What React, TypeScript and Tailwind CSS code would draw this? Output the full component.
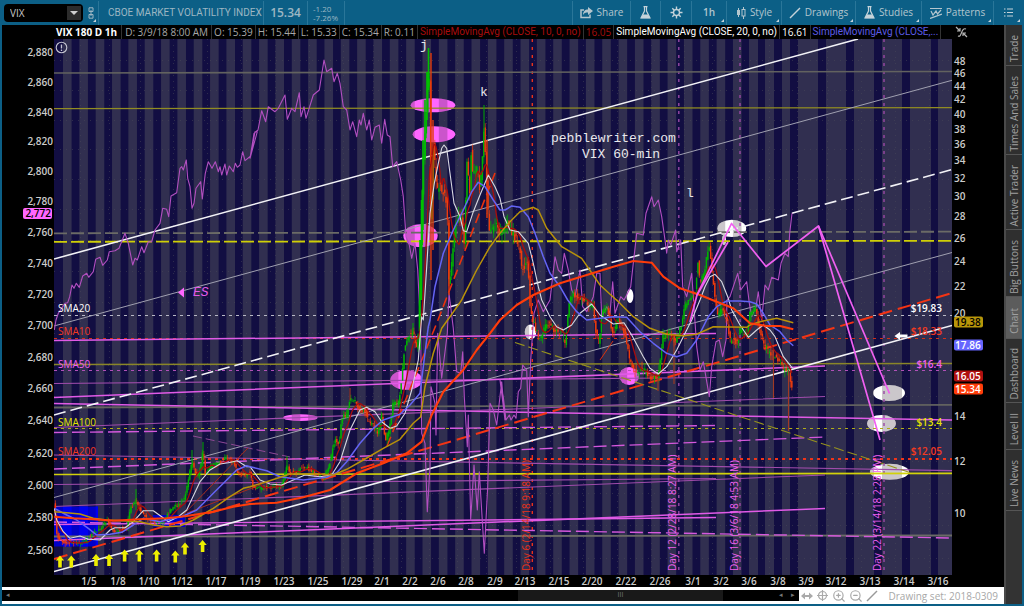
import React from "react";
import { LuZoomIn, LuZoomOut } from "react-icons/lu";

type Pt = [number, number];

/* Segments are digitised at three units per chart pixel, relative to an origin. */
const seg = (ox: number, oy: number, s: string): Pt[] =>
  s
    .trim()
    .split(/\s+/)
    .map((p) => p.split(",").map(Number))
    .map(([x, y]) => [ox + x / 3, oy + y / 3]);

const raw = (s: string): Pt[] => seg(0, 0, s).map(([x, y]) => [x * 3, y * 3]);
const line = (pts: Pt[]) => pts.map(([x, y]) => `${x.toFixed(1)},${y.toFixed(1)}`).join(" ");

const futures: Pt[] = [
  ...seg(0, 300, "163,90 168,60 175,40 188,20 195,10"),
  ...seg(0, 40, "203,788 209,770 216,735 222,745 229,730 238,742 248,708 260,700 266,712 280,695 287,658 300,652 308,676 322,660 328,635 345,632 357,625 375,580 385,610 398,675 405,655 412,660 425,620 432,638 445,605 455,605 465,570 480,550 488,505 500,508 506,530 513,468 530,458 540,385 545,380 550,390 559,360 563,415 570,440 576,505 582,490 588,445 602,425 607,477 616,400 625,365 636,385 646,365 655,395 660,380 665,405 675,372 680,405 688,378 700,395 706,370 712,382 720,375 728,335 735,362 752,348 765,275 772,275"),
  ...seg(250, 40, "0,355 12,280 24,270 35,212 47,245 55,200 75,215 85,205 105,165 112,238 125,205 135,215 148,158 153,230 162,200 168,235 182,190 190,165 208,150 222,60 230,95 245,85 252,125 262,100 270,130 280,200 290,210 300,270 308,245 320,290 328,240 333,255 340,220 350,270 358,240 365,300 375,262 388,255 395,310 404,238 412,285 420,290 428,380 440,365 452,420 460,470 468,590 478,615 485,655 495,610 503,690"),
  ...seg(250, 300, "512,90 515,400 525,430 532,635 540,500 543,260 555,310 558,405 563,100 575,235 585,155 592,100 597,-20 610,85 620,215 632,220 638,155 643,290 652,440 655,345 662,660 672,495 682,630 688,515 703,760 713,560 720,310 730,330 740,375 755,245 765,360"),
  ...seg(500, 300, "0,240 10,290 18,360 28,345 33,360 42,345 48,355 55,275 62,265 68,195 80,210 85,350 92,180"),
  ...seg(500, 40, "102,820 115,780 130,815 150,780 165,650 175,690 185,700 193,640 205,690 215,750 225,770 240,690 248,800 260,815 280,770 290,700 300,700 305,830 320,800 330,820 338,725 345,820 362,770 372,780 380,765 392,740 400,670 410,580 430,585 438,520 455,470 462,500 475,480 485,530 495,600 500,640 505,600 512,615 527,570 530,635 542,600 548,740 560,770 575,700"),
  ...seg(500, 300, "590,140 600,210 610,185 628,290 635,200 648,125 658,120 668,170 678,120 681,0"),
  ...seg(500, 40, "690,770 700,740 713,700 722,750 740,725 748,790"),
  ...seg(750, 40, "5,830 18,800 25,755 35,840 45,735 55,750 65,712 85,720 93,670 105,640 115,650 119,580 126,520"),
];

const price: Pt[] = raw(
  "54,505 57,535 60,541 70,543 80,543 88,540 92,533 100,530 107,520 112,531 120,530 127,527 130,510 136,500 140,510 147,519 155,522 163,521 170,510 178,505 185,498 188,480 192,462 196,475 199,475 203,450 205,473 212,465 220,462 226,458 233,462 238,473 245,475 250,472 253,487 260,488 270,487 282,485 287,465 289,472 297,473 302,467 307,468 317,475 324,478 330,463 335,437 339,443 342,417 347,415 350,400 357,402 358,410 365,410 368,420 373,425 378,433 382,413 385,439 389,433 393,403 399,403 404,353 408,337 413,332 417,350 419,317 421,240 423,163 427,107 429,60 431,260 433,140 437,190 440,183 447,203 449,288 453,250 456,220 462,213 464,248 467,163 470,193 471,148 473,177 478,167 480,195 482,160 484,125 487,190 489,230 493,232 497,220 500,233 503,230 507,224 513,233 520,247 522,270 528,260 530,307 533,322 540,340 545,327 550,322 553,330 563,334 565,344 568,313 570,300 572,294 578,297 587,303 593,307 595,327 599,343 602,310 607,310 613,333 618,320 625,333 629,357 635,372 643,370 652,378 658,375 663,337 670,332 675,341 680,330 685,307 688,300 695,293 698,262 700,285 704,273 709,243 712,273 715,300 717,315 722,309 727,320 730,341 738,341 740,330 747,335 750,313 755,308 760,330 765,347 773,355 780,360 783,370 789,372 792,387"
);

const ma20: Pt[] = [
  ...seg(0, 300, "163,625 170,660 190,695 210,715 240,708 265,718 300,720 330,690 345,683 375,683 400,665 430,632 460,632 485,650 505,665 535,650 560,630 600,545 630,510 660,492 685,488 712,482 740,500"),
  ...seg(250, 300, "0,500 30,540 60,552 95,555 130,540 165,525 210,530 245,525 270,485 300,390 330,330 350,322 375,335 395,365 420,385 440,378 465,340 485,270 505,180 515,50"),
  ...seg(250, 40, "520,840 530,680 540,520 553,430 565,370 575,325 582,315 590,325 600,400 612,490 630,530 640,572 650,575 670,515 690,465 715,405 735,440"),
  ...seg(500, 40, "0,475 12,530 30,570 55,575 85,610 100,670 115,740"),
  ...seg(500, 300, "125,0 150,50 170,80 190,90 215,75 240,40 275,12 300,45 340,72 372,68 395,105 430,170 450,205 475,222 500,200 530,150 550,110 575,60 600,0"),
  ...seg(500, 40, "615,740 630,710 645,703 665,725 685,775"),
  ...seg(500, 300, "695,30 720,75 745,112"),
  ...seg(750, 300, "0,108 20,90 40,75 60,90 75,110 100,170 128,205"),
];

const ma50: Pt[] = [
  ...seg(0, 300, "163,625 200,645 230,660 265,685 290,705 330,703 365,697 400,675 430,655 480,665 520,655 545,650 590,630 640,580 680,540 710,510 740,497"),
  ...seg(250, 300, "0,500 50,512 90,530 160,540 230,532 260,518 290,485 330,430 370,385 400,360 450,343 480,315 510,280 520,200 535,80"),
  ...seg(250, 40, "540,840 555,740 580,640 610,570 640,510 665,455 685,427 705,440 730,480"),
  ...seg(500, 40, "0,510 15,510 35,498 60,502 85,530 105,580 130,650 150,700 180,740"),
  ...seg(500, 300, "203,0 230,35 260,60 300,55 340,50 380,52 420,95 460,130 500,160 530,170 560,160 590,120 625,50 650,20 680,3 720,3"),
  ...seg(750, 300, "0,5 20,12 40,40 60,75 90,95 110,120 130,137"),
];

const ma100: Pt[] = [
  ...seg(0, 300, "163,635 200,638 240,642 280,655 320,660 370,662 420,665 460,675 500,680 540,678 580,660 640,625 690,590 730,565"),
  ...seg(250, 300, "0,560 50,545 120,522 200,522 250,525 290,508 340,480 400,445 450,418 490,370 512,350 525,260 550,160 575,85 600,50 635,0"),
  ...seg(250, 40, "640,770 680,690 720,620"),
  ...seg(500, 40, "0,580 30,545 60,515 100,502 115,510 140,565 185,620 245,655 300,735 360,790"),
  ...seg(500, 300, "350,0 400,50 450,85 500,103 550,107 590,103 640,80 740,82"),
  ...seg(750, 300, "0,75 30,65 80,55 130,68"),
];

const ma200: Pt[] = [
  ...seg(0, 300, "163,650 220,655 280,658 340,662 420,658 500,655 560,648 640,635 700,620"),
  ...seg(250, 300, "0,612 80,608 160,592 240,570 320,520 400,490 470,460 515,425 545,345 580,275 640,210 680,150 720,100"),
  ...seg(500, 40, "0,840 50,795 100,765 180,730 260,705 340,680 400,663 455,668 490,710 540,745 600,765 650,785"),
  ...seg(500, 300, "700,25"),
  ...seg(750, 300, "0,70 50,78 90,78 130,88"),
];

function sample(pts: Pt[], step: number): Pt[] {
  const out: Pt[] = [];
  let i = 0;
  for (let x = pts[0][0]; x <= pts[pts.length - 1][0]; x += step) {
    while (i < pts.length - 2 && pts[i + 1][0] < x) i++;
    const [x0, y0] = pts[i];
    const [x1, y1] = pts[i + 1];
    out.push([x, y0 + ((y1 - y0) * (x - x0)) / (x1 - x0)]);
  }
  return out;
}

function makeCandles() {
  let seed = 17;
  const rnd = () => {
    seed = (seed * 16807) % 2147483647;
    return seed / 2147483647;
  };
  const closes = sample(price, 1.4);
  return closes.slice(1).map(([x, y], i) => {
    const wild = x > 419 && x < 532 ? 9 : x > 532 ? 6 : x > 330 ? 5 : 3.5;
    const prev = closes[i][1] + (rnd() - 0.5) * wild;
    const close = y + (rnd() - 0.5) * wild;
    const hi = Math.min(prev, close);
    const lo = Math.max(prev, close);
    return { x, hi, lo, top: hi - rnd() * wild, bottom: lo + rnd() * wild, up: close < prev };
  });
}

const candles = makeCandles();
const closes = sample(price, 1);
const ma10: Pt[] = closes.map(([x], i) => {
  const part = closes.slice(Math.max(0, i - 11), i + 1);
  return [x, part.reduce((a, p) => a + p[1], 0) / part.length];
});

const lateSessions: Pt[] = [[749, 758], [765, 774], [782, 790], [798, 818], [826, 846], [854, 874], [882, 902], [910, 931], [938, 952]];
const sessions: Pt[] = [
  ...Array.from({ length: 42 }, (_, k): Pt => [63 + k * 16.34, 71.6 + k * 16.34]),
  ...lateSessions,
];

const leftAxis: [string, number][] = [
  ["2,880", 52], ["2,860", 82], ["2,840", 112], ["2,820", 141], ["2,800", 171], ["2,780", 201], ["2,760", 232], ["2,740", 263], ["2,720", 294],
  ["2,700", 325], ["2,680", 357], ["2,660", 388], ["2,640", 420], ["2,620", 453], ["2,600", 485], ["2,580", 517], ["2,560", 550],
];
const rightAxis: [string, number][] = [
  ["48", 61], ["46", 73], ["44", 86], ["42", 99], ["40", 114], ["38", 129], ["36", 144], ["34", 160], ["32", 178], ["30", 196],
  ["28", 216], ["26", 238], ["24", 261], ["22", 286], ["20", 313], ["14", 416], ["12", 461], ["10", 513],
];
const dates: [string, number][] = [
  ["1/5", 89], ["1/8", 118], ["1/10", 149], ["1/12", 182], ["1/17", 216], ["1/19", 250], ["1/23", 284], ["1/25", 318], ["1/29", 352], ["2/1", 382],
  ["2/2", 410], ["2/6", 438], ["2/8", 466], ["2/9", 495], ["2/13", 525], ["2/15", 559], ["2/20", 592], ["2/22", 626], ["2/26", 660], ["3/1", 693],
  ["3/2", 721], ["3/6", 749], ["3/8", 778], ["3/9", 806], ["3/12", 836], ["3/13", 870], ["3/14", 904], ["3/16", 938],
];

type Rule = { p: string; c: string; w: number; d?: string };
const rules: Rule[] = [
  { p: "54,73 952,71.5", c: "#62625f", w: 1.6 },
  { p: "54,108.7 952,107.6", c: "#918c22", w: 1.2 },
  { p: "54,233.3 952,231.7", c: "#6b6b66", w: 1.8, d: "13 4" },
  { p: "54,241.8 952,240.8", c: "#cfcf06", w: 1.8, d: "13 4" },
  { p: "54,315.5 952,315.5", c: "#b9b9c6", w: 1.1, d: "3 4" },
  { p: "54,338.5 952,338.5", c: "#d03018", w: 1.2, d: "3 4" },
  { p: "54,370.5 952,370.5", c: "#b050b8", w: 1.2, d: "3 4" },
  { p: "54,428.5 952,428.5", c: "#b0ac18", w: 1.1, d: "3 4" },
  { p: "54,459 952,459", c: "#f03418", w: 2, d: "3 4" },
  { p: "54,364.5 952,363.5", c: "#8a8628", w: 1.4 },
  { p: "54,407.5 952,404.8", c: "#62625f", w: 1.8 },
  { p: "54,474.5 952,473.4", c: "#d2d20a", w: 1.7 },
  { p: "54,536.5 952,535.5", c: "#6b6b66", w: 1.8 },
  { p: "54,340.5 716,333.5", c: "#e05ae6", w: 1.5 },
  { p: "54,383.5 716,377.5", c: "#a04cac", w: 1.1 },
  { p: "54,397.5 500,379.2 825,366", c: "#e05ae6", w: 1.5 },
  { p: "54,403.5 500,411.8 952,420", c: "#e05ae6", w: 1.5 },
  { p: "54,427.5 250,419.5 825,396.5", c: "#a04cac", w: 1.1 },
  { p: "54,432.5 716,425.5", c: "#d458dc", w: 1.4, d: "13 5" },
  { p: "54,469 825,437", c: "#d458dc", w: 1.4, d: "13 5" },
  { p: "54,455 952,470.6", c: "#a04cac", w: 1.1 },
  { p: "54,484.5 716,478.5", c: "#a04cac", w: 1.1 },
  { p: "54,506.5 825,475", c: "#a04cac", w: 1.1 },
  { p: "54,522 952,538", c: "#d458dc", w: 1.4, d: "13 5" },
  { p: "54,524.5 716,517.5", c: "#e05ae6", w: 1.4 },
  { p: "54,540.5 825,508.5", c: "#e05ae6", w: 1.5 },
  { p: "193,436 290,457", c: "#8e4896", w: 1, d: "9 4" },
  { p: "515,342.5 910,472.5", c: "#96921e", w: 1.1, d: "10 4" },
  { p: "54,259 858,39", c: "#f2f2f6", w: 1.6 },
  { p: "54,326 952,80.3", c: "#a0a0b0", w: 1 },
  { p: "54,415 952,169.5", c: "#f2f2f6", w: 1.6, d: "12 5" },
  { p: "54,497.5 952,252.5", c: "#a0a0b0", w: 1 },
  { p: "54,571.5 952,325.5", c: "#f2f2f6", w: 1.6 },
  { p: "54,559 952,293", c: "#f43414", w: 2, d: "14 6" },
  { p: "180,518 248,448", c: "#a82c1c", w: 1 },
  { p: "187,513 260,485", c: "#a82c1c", w: 1 },
  { p: "387,446 438,320 495,173", c: "#e8320f", w: 1.6, d: "10 5" },
  { p: "600,360 613,341", c: "#d8320f", w: 1 },
];

const marks: { c: [number, number, number, number]; f: string }[] = [
  { c: [433, 105.3, 22.3, 7], f: "#ff66ff" },
  { c: [434, 134.3, 21.3, 8], f: "#ff66ff" },
  { c: [420.5, 235.6, 17.2, 11.4], f: "#ff66ff" },
  { c: [406.3, 380, 16, 9.8], f: "#ff66ff" },
  { c: [300.3, 417.7, 17.2, 3.4], f: "#ff66ff" },
  { c: [629.2, 376, 10, 9], f: "#ff66ff" },
  { c: [630, 296, 3.4, 7], f: "#ffffff" },
  { c: [530.5, 332, 5.8, 7.5], f: "#ffffff" },
  { c: [731.8, 228.4, 14.4, 8.6], f: "#ffffff" },
  { c: [724, 240, 2, 5], f: "#ffffff" },
  { c: [889, 393, 16, 8], f: "#ffffff" },
  { c: [881.5, 423.5, 14.4, 8.5], f: "#ffffff" },
  { c: [889.5, 471.8, 19.6, 8], f: "#ffffff" },
];

const arrows: Pt[] = [[60, 561.5], [71.3, 561.5], [96, 560], [109, 560], [124.6, 555.5], [139.3, 555.5], [156.6, 555.5], [175.3, 556.5], [185, 548.5], [202.6, 546]];

const dayLines = [
  { x: 532.3, c: "#e8321a", t: "Day 6 (2/14/18 9:18 AM)", tx: 530 },
  { x: 678.8, c: "#9a48a6", t: "Day 12 (2/28/18 8:27 AM)", tx: 676 },
  { x: 740, c: "#9a48a6", t: "Day 16 (3/6/18 4:53 AM)", tx: 738 },
  { x: 884, c: "#9a48a6", t: "Day 22 (3/14/18 2:28 PM)", tx: 881 },
];

const levels: { n: string; v: string; y: number; c: string }[] = [
  { n: "SMA20", v: "$19.83", y: 312, c: "#ffffff" },
  { n: "SMA10", v: "$18.33", y: 335, c: "#f43a20" },
  { n: "SMA50", v: "$16.4", y: 368, c: "#f060f0" },
  { n: "SMA100", v: "$13.4", y: 426, c: "#e4e400" },
  { n: "SMA200", v: "$12.05", y: 455, c: "#f43a20" },
];

const tags: { v: string; y: number; f: string; c: string }[] = [
  { v: "19.38", y: 322, f: "#b8960a", c: "#000000" },
  { v: "17.86", y: 345, f: "#6666ff", c: "#ffffff" },
  { v: "16.05", y: 376, f: "#b01010", c: "#ffffff" },
  { v: "15.34", y: 389, f: "#ff3c0a", c: "#ffffff" },
];

function Chart() {
  return (
    <svg viewBox="2 39 1002 548" className="block h-auto w-full overflow-visible bg-black font-['Open_Sans','Noto_Sans',sans-serif]" role="img" aria-label="VIX hourly chart">
      <defs>
        <clipPath id="plot"><rect x="54" y="39" width="898" height="536" /></clipPath>
        <clipPath id="marks">{marks.map(({ c }, i) => <ellipse key={i} cx={c[0]} cy={c[1]} rx={c[2]} ry={c[3]} />)}</clipPath>
      </defs>
      <g clipPath="url(#plot)">
        <rect x="54" y="39" width="898" height="536" fill="#120e42" />
        {sessions.map(([a, b], i) => <rect key={i} x={a} y="39" width={b - a} height="536" fill="#312f50" />)}
        <g stroke="#4a4a58" strokeWidth="1" strokeDasharray="1 5" opacity=".5">
          {leftAxis.map(([t, y]) => <line key={t} x1="54" x2="952" y1={y + 8.5} y2={y + 8.5} />)}
          {dates.map(([t, x]) => <line key={t} x1={x - 8.5} x2={x - 8.5} y1="39" y2="575" />)}
        </g>
        <rect x="54" y="506.5" width="44" height="40" fill="#0000c8" />
        {sessions.slice(0, 3).map(([a, b], i) => <rect key={i} x={a} y="506.5" width={Math.min(b, 98) - a} height="40" fill="#0000f0" />)}
        <rect x="153" y="515" width="32" height="12" fill="#0000c8" />
        {marks.map(({ c, f }, i) => <ellipse key={i} cx={c[0]} cy={c[1]} rx={c[2]} ry={c[3]} fill={f} />)}
        <g clipPath="url(#marks)">
          {sessions.map(([a, b], i) => <rect key={i} x={a} y="39" width={b - a} height="536" fill="#302030" opacity=".25" />)}
        </g>
        {dayLines.map((d) => <line key={d.t} x1={d.x} x2={d.x} y1="39" y2="575" stroke={d.c} strokeWidth="1.4" strokeDasharray="3 5" />)}
        {rules.map((r, i) => <polyline key={i} points={r.p} fill="none" stroke={r.c} strokeWidth={r.w} strokeDasharray={r.d} />)}
        <g fill="none" strokeLinejoin="round">
          <polyline points={line(futures)} stroke="#b24fc0" strokeWidth="1.1" />
          {candles.map((k, i) => (
            <g key={i} stroke={k.up ? "#00b400" : "#f03c0c"}>
              <line x1={k.x} x2={k.x} y1={k.top} y2={k.bottom} strokeWidth=".7" />
              <line x1={k.x} x2={k.x} y1={k.hi} y2={k.lo} strokeWidth="1.4" />
            </g>
          ))}
          <g stroke="#00a800" strokeWidth="1">
            <path d="M136 510V489M192 470V450M203 470V442M287 470V456M484 140V105M413 335V323" />
          </g>
          <g stroke="#00c000" strokeWidth="1.6">
            <path d="M420 350V240M421.500 300V200M423 230V140M425 160V100M427 120V72M428.500 90V48" />
          </g>
          <g stroke="#e03a0c" strokeWidth="1.4"><path d="M431 53V280M433 120V250M449 220V295M487 140V218" /></g>
          <g stroke="#a03a24" strokeWidth="1.1"><path d="M788.500 370V431M773.500 355V398M350 400V388M658 378V391M674 340V384" /></g>
          <polyline points={line(ma10)} stroke="#a80c0c" strokeWidth="1.3" />
          <polyline points={line(ma20)} stroke="#d8d8e0" strokeWidth="1.1" />
          <polyline points={line(ma50)} stroke="#6464f4" strokeWidth="1.5" />
          <polyline points={line(ma100)} stroke="#b8920a" strokeWidth="1.5" />
          <polyline points={line(ma200)} stroke="#ff3c0a" strokeWidth="2.1" />
          <g stroke="#f060f0" strokeWidth="1.7">
            <polyline points="690,322 697,295 731.500,223.500 766,266.500 818.500,226 880,440" />
            <polyline points="697,295 728,242" />
            <polyline points="818.500,226 889.500,393.500" />
          </g>
        </g>
        {arrows.map(([x, y], i) => <path key={i} transform={`translate(${x} ${y})`} d="M0-6L4.200-1H1.800V6H-1.800V-1H-4.200Z" fill="#eeee00" />)}
        <path d="M894.500 336L900 332V334.500H907.500V337.500H900V340Z" fill="#fff" />
        <path d="M178 292.500L184 287.500V297.500Z" fill="#ff66ff" />
        <g className="text-[10px]">
          {levels.map((l) => (
            <g key={l.n} fill={l.c}>
              <text x="58" y={l.y} className="font-medium">{l.n}</text>
              <text x="942" y={l.y} textAnchor="end" className="font-semibold">{l.v}</text>
            </g>
          ))}
          {dayLines.map((d, i) => <text key={d.t} transform={`translate(${d.tx} 571) rotate(-90)`} className="font-medium" fill={i ? "#f060f0" : "#e8321a"}>{d.t}</text>)}
        </g>
        <g className="font-['Liberation_Mono',monospace] text-[13px]" fill="#e8e8ec">
          <text x="551" y="142">pebblewriter.com</text>
          <text x="582" y="158">VIX 60-min</text>
          <text x="420" y="49">j</text>
          <text x="480" y="96">k</text>
          <text x="686" y="197">l</text>
          <text x="193" y="296" fontStyle="italic" fill="#e45ae8">ES</text>
        </g>
        <circle cx="61.500" cy="47.500" r="5.300" fill="none" stroke="#c4c4d0" strokeWidth="1.100" />
        <path d="M61.500 44.500V48.500M61.500 49.600V51" stroke="#c4c4d0" strokeWidth="1.400" />
      </g>
      <g fill="#cccccc" className="text-[10px] font-semibold">
        {leftAxis.map(([t, y]) => <text key={t} x="53" y={y + 4} textAnchor="end">{t}</text>)}
        {rightAxis.map(([t, y]) => <text key={t} x="954" y={y + 4}>{t}</text>)}
        {dates.map(([t, x]) => <text key={t} x={x} y="585" textAnchor="middle">{t}</text>)}
      </g>
      <g className="text-[10px] font-semibold">
        <rect x="23" y="208" width="29" height="11" rx="2" fill="#ff66ff" />
        <text x="51" y="217" textAnchor="end" fill="#000">2,772</text>
        {tags.map((t) => (
          <g key={t.v}>
            <rect x="954" y={t.y - 5.5} width="29" height="11" rx="2" fill={t.f} />
            <text x="955" y={t.y + 4} fill={t.c}>{t.v}</text>
          </g>
        ))}
      </g>
    </svg>
  );
}

const Corner = () => <span className="absolute right-[2px] bottom-[3px] border-b-[3px] border-l-[3px] border-b-[#c5d3da] border-l-transparent" />;

function Tool({ label, w, menu, children }: { label: string; w: string; menu?: boolean; children?: React.ReactNode }) {
  return (
    <button aria-label={label} className={`relative flex h-6 items-center justify-center gap-1 border-l border-[#2a7699] text-[10px] text-[#b4c6ce] ${w}`}>
      {children}
      {menu && <Corner />}
    </button>
  );
}

const Flask = () => (
  <svg width="11" height="13" viewBox="0 0 11 13"><path d="M3.500 .6H7.500M4.500 .6V5L1 12H10L6.500 5V.6" fill="none" stroke="#c5d3da" strokeWidth="1.200" /><path d="M2.800 8.500H8.200L10 12.300H1Z" fill="#c5d3da" /></svg>
);

function Header() {
  return (
    <header className="flex h-[25px] items-center text-[#9db7c3]">
      <div className="relative ml-[2px] flex h-[18px] w-[79px] shrink-0 items-center rounded-sm bg-black">
        <select aria-label="Symbol" className="h-4 w-full appearance-none bg-transparent p-0 pl-[6px] text-[10px] leading-4 text-[#c8c8c8]">
          <option>VIX</option>
        </select>
        <span className="pointer-events-none absolute top-[2px] right-[2px] flex h-[14px] w-[14px] items-center justify-center bg-[#2c2c2c]">
          <span className="border-x-4 border-t-4 border-x-transparent border-t-[#d0d0d0]" />
        </span>
      </div>
      <div className="relative flex h-6 w-[15px] items-center justify-center">
        <svg width="6" height="12" viewBox="0 0 6 12" fill="none" stroke="#9db7c3"><path d="M1 .8H5V4.500H1ZM1 7.500H5V11.200H1ZM3 3V9" /></svg>
        <Corner />
      </div>
      <div className="flex h-6 w-[165px] items-center border-l border-[#2a7699] pl-[9px] font-['Roboto',sans-serif] text-[10px] whitespace-nowrap">CBOE MARKET VOLATILITY INDEX</div>
      <div className="flex h-6 w-11 items-center justify-center border-l border-[#2a7699] text-[12px] font-semibold">15.34</div>
      <div className="flex h-6 w-[37px] flex-col justify-center border-l border-[#2a7699] pl-[5px] text-[8px] leading-[9px]">
        <span>-1.20</span>
        <span>-7.26%</span>
      </div>
      <div className="h-6 grow border-l border-[#2a7699]" />
      <Tool label="Share" w="w-[58px]">
        <svg width="13" height="12" viewBox="0 0 13 12"><path d="M10 7.500V10.500H1V3H4" fill="none" stroke="#b4c6ce" strokeWidth="1.500" /><path d="M8 0L13 4L8 8V5.500C5.500 5.500 4 6 3 8C3 4.500 5 2.500 8 2.500Z" fill="#b4c6ce" /></svg>
        Share
      </Tool>
      <Tool label="Lab" w="w-[30px]"><Flask /></Tool>
      <Tool label="Settings" w="w-[31px]">
        <svg width="13" height="13" viewBox="0 0 13 13" fill="none" stroke="#c5d3da" strokeWidth="1.400"><circle cx="6.500" cy="6.500" r="3" /><path d="M6.500 .5V3M6.500 10V12.500M.5 6.500H3M10 6.500H12.500M2.300 2.300L4 4M9 9L10.700 10.700M10.700 2.300L9 4M4 9L2.300 10.700" /></svg>
      </Tool>
      <Tool label="1h" w="w-[35px]" menu><span className="font-semibold">1h</span></Tool>
      <Tool label="Style" w="w-[55px]" menu>
        <svg width="10" height="12" viewBox="0 0 10 12"><path d="M2.500 1V10M7.500 0V12" stroke="#b4c6ce" /><rect x="1" y="3" width="3" height="5" fill="#b4c6ce" /><rect x="6" y="2.500" width="3" height="6.500" fill="#0c5f86" stroke="#b4c6ce" /></svg>
        Style
      </Tool>
      <Tool label="Drawings" w="w-[74px]" menu>
        <svg width="12" height="12" viewBox="0 0 12 12"><path d="M1 11L11 1" stroke="#c5d3da" strokeWidth="1.500" /></svg>
        Drawings
      </Tool>
      <Tool label="Studies" w="w-[66px]" menu><Flask />Studies</Tool>
      <Tool label="Patterns" w="w-[72px]" menu>
        <svg width="12" height="12" viewBox="0 0 12 12" fill="none" stroke="#b4c6ce" strokeWidth="1.200"><path d="M0 1.500H12M0 11.500L12 7M1 4L3 8L6 4L7.500 7L11 3" /></svg>
        Patterns
      </Tool>
      <Tool label="List" w="w-[29px]" menu>
        <svg width="9" height="9" viewBox="0 0 9 9" stroke="#c5d3da" strokeWidth="1.200"><path d="M0 1H1.500M3 1H9M0 4.500H1.500M3 4.500H9M0 8H1.500M3 8H9" /></svg>
      </Tool>
    </header>
  );
}

const study = "px-[2px] font-['Roboto',sans-serif]";
const cells: { t: string; c: string }[] = [
  { t: "VIX 180 D 1h", c: "pr-1 pl-[2px] font-bold text-white" },
  { t: "D: 3/9/18 8:00 AM", c: "px-[3px] text-[#a8a8a8]" },
  { t: "O: 15.39", c: "px-[2px] text-[#a8a8a8]" },
  { t: "H: 15.44", c: "px-[2px] text-[#a8a8a8]" },
  { t: "L: 15.33", c: "px-[2px] text-[#a8a8a8]" },
  { t: "C: 15.34", c: "px-[2px] text-[#a8a8a8]" },
  { t: "R: 0.11", c: "px-[2px] text-[#a8a8a8]" },
  { t: "SimpleMovingAvg (CLOSE, 10, 0, no)", c: `${study} text-[#a80c0c]` },
  { t: "16.05", c: "px-[2px] text-[#a80c0c]" },
  { t: "SimpleMovingAvg (CLOSE, 20, 0, no)", c: `${study} text-white` },
  { t: "16.61", c: "px-[2px] text-white" },
  { t: "SimpleMovingAvg (CLOSE,...", c: `${study} text-[#5c5ce8]` },
];

const tabs = [
  { t: "Trade", h: "h-[41px]" },
  { t: "Times And Sales", h: "h-[89px]" },
  { t: "Active Trader", h: "h-[75px]" },
  { t: "Big Buttons", h: "h-[67px]" },
  { t: "Chart", h: "h-[42px]" },
  { t: "Dashboard", h: "h-[64px]" },
  { t: "Level II", h: "h-[47px]" },
  { t: "Live News", h: "h-[61px]" },
];

export default function App() {
  return (
    <div className="flex min-h-screen flex-col bg-[#0c5f86] px-[2px] pb-[2px] font-['Open_Sans','Noto_Sans',sans-serif]">
      <Header />
      <div className="flex grow">
        <main className="flex min-w-0 grow flex-col bg-black">
          <div className="flex h-[14px] items-center pr-9 pl-[52px] text-[10px] leading-[14px] whitespace-nowrap">
            {cells.map((c) => <span key={c.t} className={`border-r border-[#333] ${c.c}`}>{c.t}</span>)}
            <svg className="ml-auto shrink-0" width="13" height="12" viewBox="0 0 13 12" fill="none" stroke="#b4b4b4" strokeWidth="1.200"><path d="M1 1L5 5M5 2V5H2M12 11L8 7M8 10V7H11M3 10C7 12 6 1 11 3" /></svg>
          </div>
          <Chart />
          <footer className="flex grow items-center bg-white text-[10px] text-[#a8a8a8]">
            <div className="flex h-[11px] grow items-center bg-black text-[7px] text-[#777]">
              <span className="w-[516px] pl-1">◂</span>
              <span className="flex h-full w-[205px] items-center justify-center bg-[#191919]">III</span>
              <span className="ml-auto flex gap-2 pr-1"><span>◂</span><span>▸</span></span>
            </div>
            <div className="flex items-center gap-[3px] pr-[6px] pl-[2px]">
              <svg width="12" height="12" viewBox="0 0 12 12" fill="#aaa"><path d="M0 6L4 2.500V5H8V2.500L12 6L8 9.500V7H4V9.500Z" /></svg>
              <svg width="13" height="13" viewBox="0 0 13 13" fill="none" stroke="#aaa" strokeWidth="1.200"><circle cx="6.500" cy="6.500" r="4" /><path d="M6.500 1V12M1 6.500H12" /></svg>
              <LuZoomIn size={14} />
              <LuZoomOut size={14} />
              <svg width="12" height="12" viewBox="0 0 12 12"><path d="M1 11L11 1" stroke="#999" strokeWidth="1.500" /></svg>
              <span className="pl-2 leading-[14px] whitespace-nowrap">Drawing set: 2018-0309</span>
            </div>
          </footer>
        </main>
        <nav className="flex w-[18px] shrink-0 flex-col border-l-2 border-[#4a4a4a] bg-[#333]">
          {tabs.map((t) => (
            <button key={t.t} className={`flex items-center justify-center border-b border-[#555] pt-[7px] text-[10px] text-[#a0a0a0] ${t.h} ${t.t === "Chart" ? "bg-[#5c5c5c]" : "bg-[#2f2f2f]"}`}>
              <span className="rotate-180 whitespace-nowrap [writing-mode:vertical-rl]">{t.t}</span>
            </button>
          ))}
        </nav>
      </div>
    </div>
  );
}
